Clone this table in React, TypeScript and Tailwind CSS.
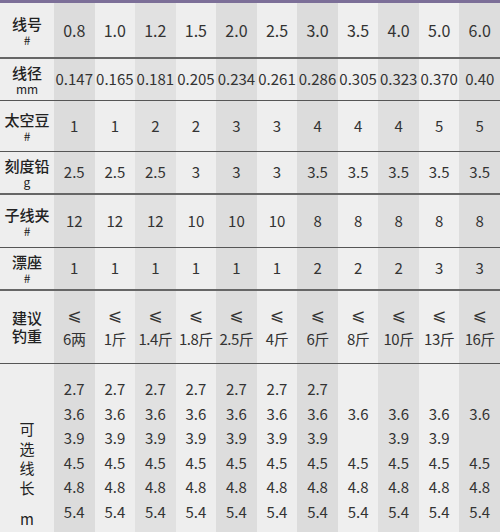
import React from "react";

const colBg = [
  "bg-[#eeeeee]",
  "bg-[#dcdcdc]",
  "bg-[#eeeeee]",
  "bg-[#e1e1e1]",
  "bg-[#eeeeee]",
  "bg-[#dddddd]",
  "bg-[#eeeeee]",
  "bg-[#dcdcdc]",
  "bg-[#efefef]",
  "bg-[#dfdfdf]",
  "bg-[#efefef]",
  "bg-[#dddddd]",
];

type Row = {
  label: string;
  unit: string;
  values: string[];
  height: string;
  border: string;
  valueSize?: string;
};

const rows: Row[] = [
  {
    label: "线号",
    unit: "#",
    values: ["0.8", "1.0", "1.2", "1.5", "2.0", "2.5", "3.0", "3.5", "4.0", "5.0", "6.0"],
    height: "h-[56px]",
    border: "border-b-2 border-[#666666]",
    valueSize: "text-[16px]",
  },
  {
    label: "线径",
    unit: "mm",
    values: ["0.147", "0.165", "0.181", "0.205", "0.234", "0.261", "0.286", "0.305", "0.323", "0.370", "0.40"],
    height: "h-[42px]",
    border: "border-b border-[#555555]",
  },
  {
    label: "太空豆",
    unit: "#",
    values: ["1", "1", "2", "2", "3", "3", "4", "4", "4", "5", "5"],
    height: "h-[51px]",
    border: "border-b border-[#555555]",
  },
  {
    label: "刻度铅",
    unit: "g",
    values: ["2.5", "2.5", "2.5", "3", "3", "3", "3.5", "3.5", "3.5", "3.5", "3.5"],
    height: "h-[43px]",
    border: "border-b-2 border-[#666666]",
  },
  {
    label: "子线夹",
    unit: "#",
    values: ["12", "12", "12", "10", "10", "10", "8", "8", "8", "8", "8"],
    height: "h-[53px]",
    border: "border-b border-[#555555]",
  },
  {
    label: "漂座",
    unit: "#",
    values: ["1", "1", "1", "1", "1", "1", "2", "2", "2", "3", "3"],
    height: "h-[43px]",
    border: "border-b-2 border-[#666666]",
  },
];

const weights = ["6两", "1斤", "1.4斤", "1.8斤", "2.5斤", "4斤", "6斤", "8斤", "10斤", "13斤", "16斤"];

// line lengths available per line number, "" = not offered
const lengths = [
  ["2.7", "3.6", "3.9", "4.5", "4.8", "5.4"],
  ["2.7", "3.6", "3.9", "4.5", "4.8", "5.4"],
  ["2.7", "3.6", "3.9", "4.5", "4.8", "5.4"],
  ["2.7", "3.6", "3.9", "4.5", "4.8", "5.4"],
  ["2.7", "3.6", "3.9", "4.5", "4.8", "5.4"],
  ["2.7", "3.6", "3.9", "4.5", "4.8", "5.4"],
  ["2.7", "3.6", "3.9", "4.5", "4.8", "5.4"],
  ["", "3.6", "", "4.5", "4.8", "5.4"],
  ["", "3.6", "3.9", "4.5", "4.8", "5.4"],
  ["", "3.6", "3.9", "4.5", "4.8", "5.4"],
  ["", "3.6", "", "4.5", "4.8", "5.4"],
];

const gridCols = "grid grid-cols-[54px_repeat(11,minmax(0,1fr))]";

export default function App() {
  return (
    <div
      className="w-[500px] h-[532px] overflow-hidden bg-[#eeeeee] text-[#333333]"
      style={{ fontFamily: '"Noto Sans CJK SC", "Noto Sans", sans-serif' }}
    >
      <div className="h-[3px] bg-[#7c6f98]" />

      {rows.map((row) => (
        <div key={row.label} className={`${gridCols} ${row.height} ${row.border}`}>
          <div className={`${colBg[0]} flex flex-col items-center justify-center text-[#222222]`}>
            <span className="text-[15px] font-medium leading-[18px] whitespace-nowrap">{row.label}</span>
            <span className="text-[12px] leading-[13px]">{row.unit}</span>
          </div>
          {row.values.map((v, i) => (
            <div
              key={i}
              className={`${colBg[i + 1]} flex items-center justify-center whitespace-nowrap ${row.valueSize ?? "text-[15px]"}`}
            >
              {v}
            </div>
          ))}
        </div>
      ))}

      {/* 建议钓重 */}
      <div className={`${gridCols} h-[73px] border-b border-[#555555]`}>
        <div className={`${colBg[0]} flex flex-col items-center justify-center text-[15px] font-medium leading-[18px] text-[#222222]`}>
          <span>建议</span>
          <span>钓重</span>
        </div>
        {weights.map((w, i) => (
          <div key={i} className={`${colBg[i + 1]} flex flex-col items-center justify-center text-[15px] leading-[23px] whitespace-nowrap`}>
            <span style={{ fontFamily: '"DejaVu Sans", sans-serif' }} className="text-[17px]">⩽</span>
            <span className="tracking-[-0.5px]">{w}</span>
          </div>
        ))}
      </div>

      {/* 可选线长 */}
      <div className={`${gridCols} h-[200px]`}>
        <div className={`${colBg[0]} flex flex-col items-center pt-[55px] text-[15px] leading-[19.5px] text-[#222222]`}>
          <span>可</span>
          <span>选</span>
          <span>线</span>
          <span>长</span>
          <span className="mt-[12px]">m</span>
        </div>
        {lengths.map((col, i) => (
          <div key={i} className={`${colBg[i + 1]} flex flex-col items-center pt-[13px] text-[15px] leading-[24.5px]`}>
            {col.map((v, j) => (
              <span key={j} className="h-[24.5px]">
                {v}
              </span>
            ))}
          </div>
        ))}
      </div>
    </div>
  );
}
